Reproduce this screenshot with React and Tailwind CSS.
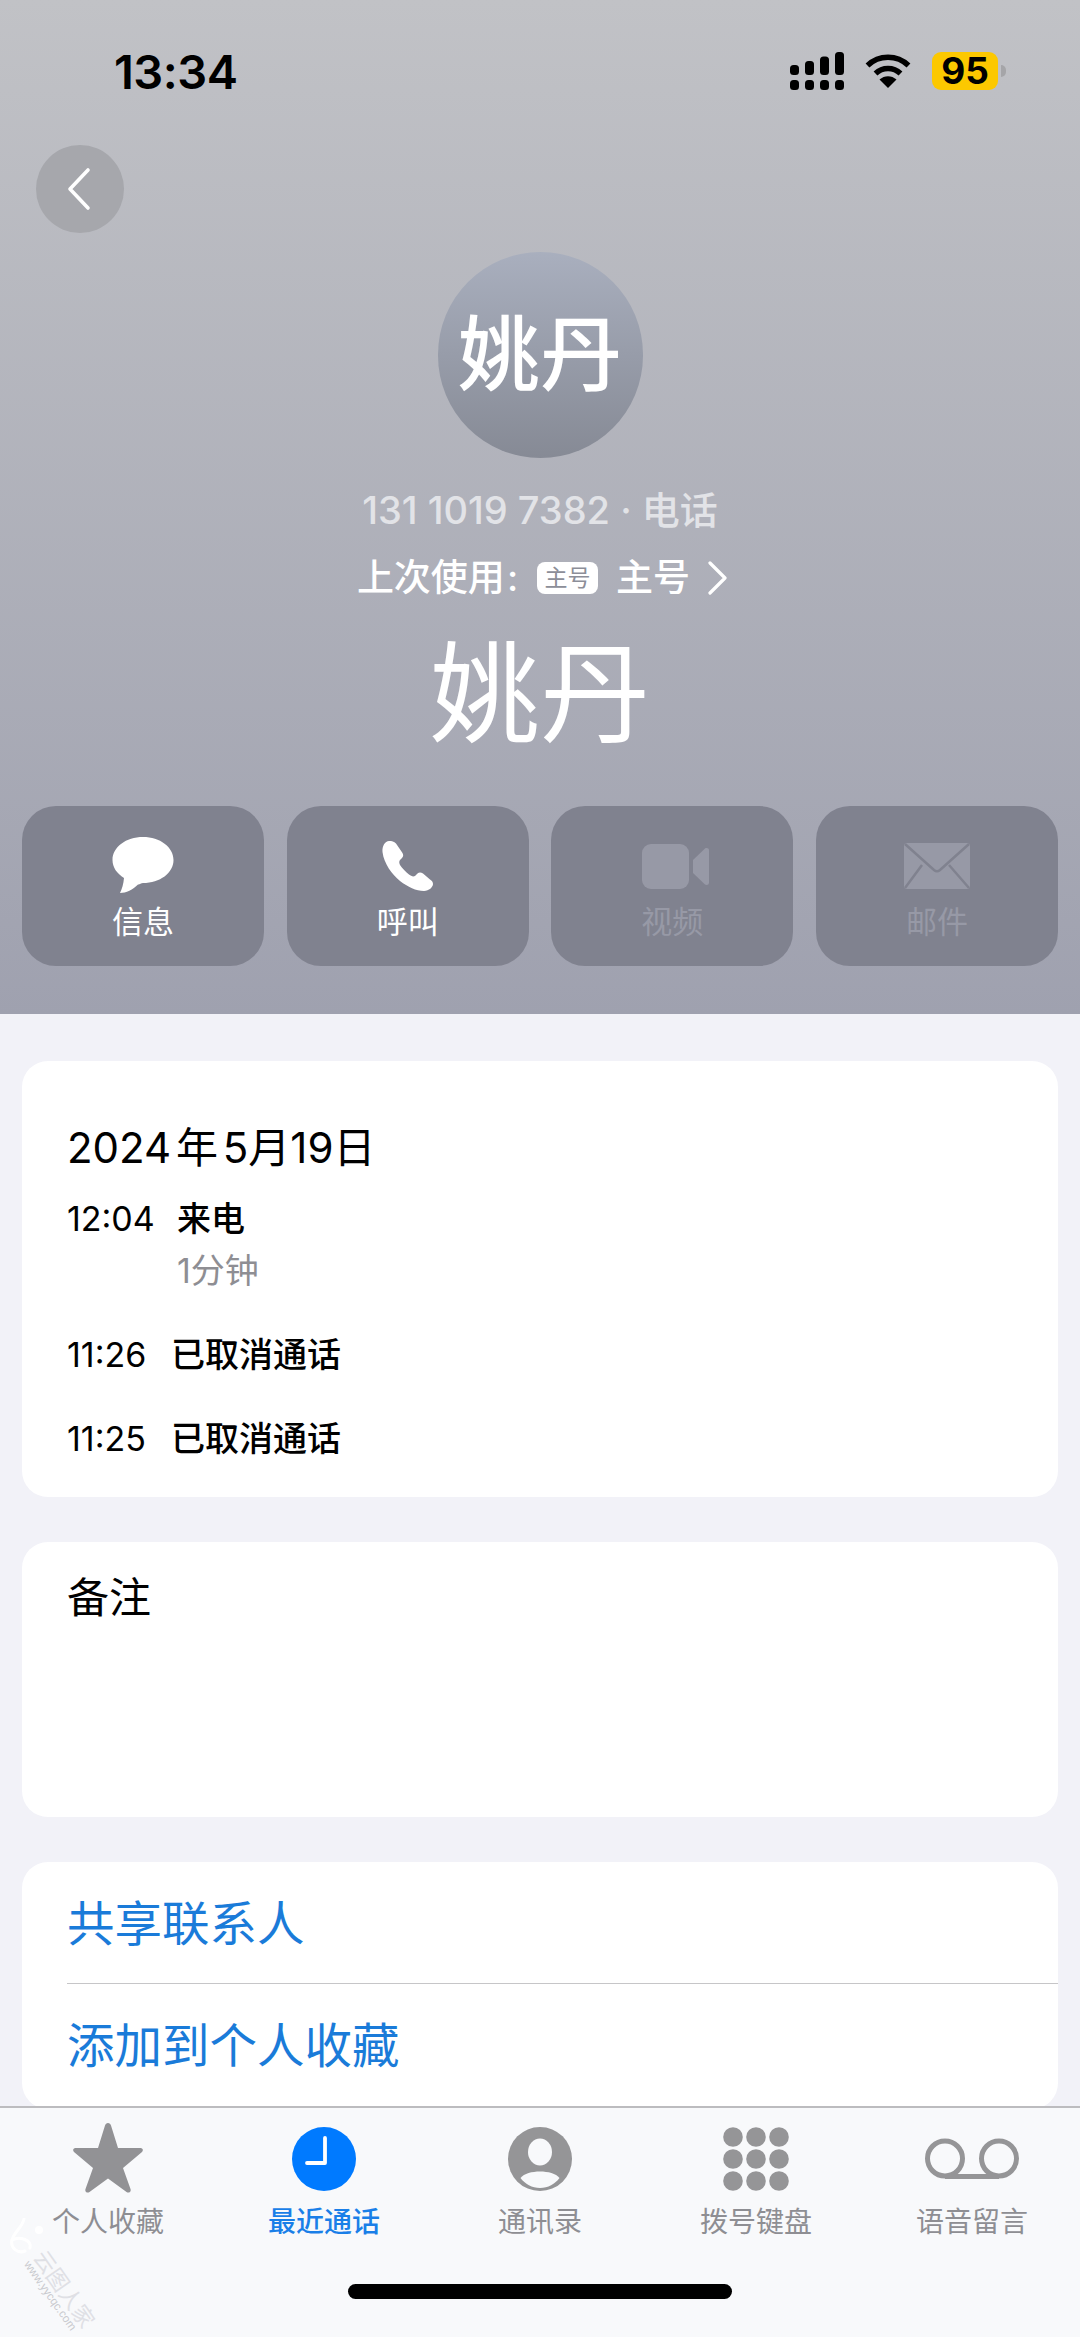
const sans = "font-['Inter','Noto_Sans_CJK_SC',sans-serif]";

function Signal() {
  return (
    <svg width="54" height="38" viewBox="0 0 54 38" fill="#000">
      <rect x="0" y="13" width="9" height="10" rx="3.5" />
      <rect x="15" y="9" width="9" height="14" rx="3.5" />
      <rect x="30" y="4.5" width="9" height="18.5" rx="3.5" />
      <rect x="45" y="0" width="9" height="23" rx="3.5" />
      <rect x="0" y="28" width="9" height="10" rx="3.5" />
      <rect x="15" y="28" width="9" height="10" rx="3.5" />
      <rect x="30" y="28" width="9" height="10" rx="3.5" />
      <rect x="45" y="28" width="9" height="10" rx="3.5" />
    </svg>
  );
}

function Wifi() {
  return (
    <svg width="46" height="34" viewBox="0 0 46 34" fill="none" stroke="#000" strokeWidth="5.5">
      <path d="M2.5 11.5C14 .5 32 .5 43.5 11.5" />
      <path d="M10.5 19.5C17.5 12.8 28.5 12.8 35.5 19.5" />
      <path d="M23 34L14.5 25.5C19.5 21 26.5 21 31.5 25.5Z" fill="#000" stroke="none" />
    </svg>
  );
}

function ActionBtn({ label, dim, children }) {
  return (
    <div className="w-[242px] h-[160px] rounded-[34px] bg-[#80828f] flex flex-col items-center">
      <div className={`h-[58px] mt-[31px] flex items-center justify-center ${dim ? "text-[#9799a6]" : "text-white"}`}>
        {children}
      </div>
      <div className={`mt-[9px] text-[31px] leading-[36px] ${dim ? "text-[#9799a6]" : "text-white"}`}>{label}</div>
    </div>
  );
}

function TabItem({ label, active, children }) {
  return (
    <div className="w-[216px] flex flex-col items-center">
      <div className="h-[72px] flex items-center justify-center">{children}</div>
      <div className={`mt-[9px] text-[28px] leading-[36px] ${active ? "text-[#1a7fe8] font-medium" : "text-[#8e8e93]"}`}>{label}</div>
    </div>
  );
}

export default function App() {
  return (
    <div className={`relative w-[1080px] h-[2337px] overflow-hidden flex flex-col bg-[#f2f2f8] ${sans}`}>
      <div className="h-[1014px] shrink-0 bg-gradient-to-b from-[#c1c2c6] to-[#9fa1af] flex flex-col">
        <div className="h-[145px] shrink-0 flex items-start justify-between pl-[114px] pr-[74px]">
          <div className="mt-[45px] text-[47px] leading-[54px] font-semibold text-black tracking-[-0.5px]">13:34</div>
          <div className="mt-[52px] flex items-start">
            <Signal />
            <div className="ml-[21px] mt-[2px]"><Wifi /></div>
            <div className="ml-[21px] w-[66px] h-[38px] rounded-[9px] bg-[#fcc800] flex items-center justify-center text-[37px] font-bold text-black">95</div>
            <div className="ml-[3px] mt-[13px] w-[5px] h-[12px] rounded-r-full bg-[#a5a5a8]" />
          </div>
        </div>
        <div className="pl-[36px] h-[88px] shrink-0">
          <div className="w-[88px] h-[88px] rounded-full bg-[#a6a7ac] flex items-center justify-center">
            <svg className="mr-[5px]" width="26" height="44" viewBox="0 0 26 44" fill="none" stroke="#fff" strokeWidth="3.6" strokeLinecap="round" strokeLinejoin="round">
              <path d="M23 3L5 22L23 41" />
            </svg>
          </div>
        </div>
        <div className="mt-[19px] self-center w-[205px] h-[206px] rounded-full bg-gradient-to-b from-[#a9afbe] to-[#868a95] flex items-center justify-center text-white text-[82px] leading-none font-medium shrink-0">姚丹</div>
        <div className="mt-[29px] text-center text-[38px] leading-[46px] font-medium text-[#e2e3e7]">131 1019 7382 · 电话</div>
        <div className="mt-[22px] pl-[6px] flex items-center justify-center text-white text-[37px] leading-[46px] font-medium">
          <span>上次使用</span>
          <span className="ml-[2px]">:</span>
          <span className="ml-[19px] w-[61px] h-[32px] rounded-[8px] bg-white text-[#8c8e98] text-[23px] leading-[32px] text-center font-normal">主号</span>
          <span className="ml-[18px]">主号</span>
          <svg className="ml-[17px]" width="22" height="34" viewBox="0 0 22 34" fill="none" stroke="#fff" strokeWidth="3.2" strokeLinecap="round" strokeLinejoin="round">
            <path d="M3 2L18 17L3 32" />
          </svg>
        </div>
        <div className="mt-[28px] text-center text-white text-[110px] leading-[130px]">姚丹</div>
        <div className="mt-[47px] px-[22px] flex justify-between">
          <ActionBtn label="信息">
            <svg width="62" height="58" viewBox="0 0 62 58" fill="currentColor">
              <path d="M31 0C14 0 .5 10 .5 23C.5 30.500 5 36.500 12 41C11.500 47 10 52 8 56C14 56 21 52.500 26 47.500C27.500 47.800 29 46 31 46C48 46 61.500 36 61.500 23C61.500 10 48 0 31 0Z" />
            </svg>
          </ActionBtn>
          <ActionBtn label="呼叫">
            <svg width="52" height="52" viewBox="0 0 52 52" fill="currentColor">
              <path d="M7 1C3 1 0 6 .5 12C2 24 10 34 18 41C26 47 34 51 42 51C47 51 51 47 51 44C51 42 50 41 48 39.500L41 33.500C39 32 37 32 35.500 33.500L33 36C31 37 29 36 27 34.500C24 32 20 28 18 25C17 23 17 21 18 20L20 18C21.500 16.500 21.500 15 20.500 13L14 3.500C12 1.500 10 1 7 1Z" />
            </svg>
          </ActionBtn>
          <ActionBtn label="视频" dim>
            <svg className="ml-[6px]" width="67" height="45" viewBox="0 0 67 45" fill="currentColor">
              <rect x="0" y="0" width="47" height="45" rx="9" />
              <path d="M51 16L63 4.500C64.500 3.500 67 4 67 6.500V38.500C67 41 64.500 41.500 63 40.500L51 29Z" />
            </svg>
          </ActionBtn>
          <ActionBtn label="邮件" dim>
            <svg width="66" height="46" viewBox="0 0 66 46">
              <rect x="0" y="0" width="66" height="46" rx="3" fill="currentColor" />
              <path d="M1 1L30 27Q33 29.500 36 27L65 1M1 45L18 22M65 45L45 22" fill="none" stroke="#80828f" strokeWidth="2.500" />
            </svg>
          </ActionBtn>
        </div>
      </div>

      <div className="flex-1 min-h-0 overflow-hidden px-[22px] pt-[47px] flex flex-col gap-[45px] text-black">
        <div className="h-[436px] shrink-0 bg-white rounded-[26px] px-[45px] pt-[61px]">
          <div className="text-[42px] leading-[52px] [word-spacing:-7px]">2024 年 5月19日</div>
          <div className="mt-[23px] flex text-[34px] leading-[44px]">
            <span className="w-[110px]">12:04</span>
            <div>
              <div className="font-medium">来电</div>
              <div className="mt-[8px] text-[#8e8e93]">1分钟</div>
            </div>
          </div>
          <div className="mt-[40px] flex text-[34px] leading-[44px]">
            <span className="w-[104px]">11:26</span>
            <span className="font-medium">已取消通话</span>
          </div>
          <div className="mt-[40px] flex text-[34px] leading-[44px]">
            <span className="w-[104px]">11:25</span>
            <span className="font-medium">已取消通话</span>
          </div>
        </div>
        <div className="h-[275px] shrink-0 bg-white rounded-[26px] px-[45px] pt-[30px] text-[42px] leading-[52px]">备注</div>
        <div className="shrink-0 bg-white rounded-[26px] pl-[45px] text-[47.500px] text-[#1a7bd9]">
          <div className="h-[122px] leading-[124px] border-b-[1.5px] border-[#c6c6c8]">共享联系人</div>
          <div className="h-[125px] leading-[124px]">添加到个人收藏</div>
        </div>
      </div>

      <div className="h-[231px] shrink-0 bg-[#f8f9fb] border-t-2 border-[#bcbcbf] flex flex-col">
        <div className="pt-[15px] flex">
          <TabItem label="个人收藏">
            <svg className="mb-[2px]" width="70" height="70" viewBox="0 0 70 70" fill="#929295">
              <path d="M35 0C36.500 0 37.500 1 38 2.500L45 25H67.500C70 25 70.500 27.500 69 29L50 45L57.500 66C58.500 69 55.500 70.500 53.500 69L35 55.500L16.500 69C14.500 70.500 11.500 69 12.500 66L20 45L1 29C-.5 27.500 0 25 2.500 25H25L32 2.500C32.500 1 33.500 0 35 0Z" />
            </svg>
          </TabItem>
          <TabItem label="最近通话" active>
            <svg width="64" height="64" viewBox="0 0 64 64">
              <circle cx="32" cy="32" r="32" fill="#007aff" />
              <path d="M33 11V36H15" fill="none" stroke="#fff" strokeWidth="3.800" strokeLinecap="round" strokeLinejoin="round" />
            </svg>
          </TabItem>
          <TabItem label="通讯录">
            <svg width="64" height="64" viewBox="0 0 64 64">
              <circle cx="32" cy="32" r="32" fill="#959597" />
              <ellipse cx="32" cy="25" rx="12" ry="13.500" fill="#f8f9fb" />
              <path d="M12.500 51C16 46.500 24 44.500 32 44.500C40 44.500 48 46.500 51.500 51C47 57 40 61 32 61C24 61 17 57 12.500 51Z" fill="#f8f9fb" />
            </svg>
          </TabItem>
          <TabItem label="拨号键盘">
            <svg width="66" height="64" viewBox="0 0 66 64" fill="#959597">
              <circle cx="10" cy="10" r="9.800" /><circle cx="33" cy="10" r="9.800" /><circle cx="56" cy="10" r="9.800" />
              <circle cx="10" cy="32" r="9.800" /><circle cx="33" cy="32" r="9.800" /><circle cx="56" cy="32" r="9.800" />
              <circle cx="10" cy="54" r="9.800" /><circle cx="33" cy="54" r="9.800" /><circle cx="56" cy="54" r="9.800" />
            </svg>
          </TabItem>
          <TabItem label="语音留言">
            <svg width="94" height="42" viewBox="0 0 94 42" fill="none" stroke="#959597" strokeWidth="5">
              <circle cx="20" cy="20.500" r="17.500" />
              <circle cx="74" cy="20.500" r="17.500" />
              <path d="M20 38.500H74" />
            </svg>
          </TabItem>
        </div>
        <div className="mt-[44px] self-center w-[384px] h-[15px] rounded-full bg-black" />
      </div>

      <div className="absolute left-[6px] top-[2218px] w-[100px] h-[119px] pointer-events-none">
        <svg className="absolute left-[2px] top-0" width="38" height="38" viewBox="0 0 38 38" fill="none" stroke="#ffffff" strokeWidth="3" strokeLinecap="round">
          <path d="M16 1C14 10 6 14 4 22C2 30 10 36 17 33" />
          <path d="M4 22C12 18 24 22 22 30" />
          <circle cx="31" cy="12" r="4" fill="#ffffff" stroke="none" />
        </svg>
        <div className="absolute left-[33px] top-[23px] rotate-[55deg] origin-left whitespace-nowrap text-[22px] leading-[24px] text-[#dfe0e5]">云图人家</div>
        <div className="absolute left-[21px] top-[38px] rotate-[55deg] origin-left whitespace-nowrap text-[11.500px] leading-[12px] text-[#c8c9ce] font-['Liberation_Sans',sans-serif]">www.yycqc.com</div>
      </div>
    </div>
  );
}
